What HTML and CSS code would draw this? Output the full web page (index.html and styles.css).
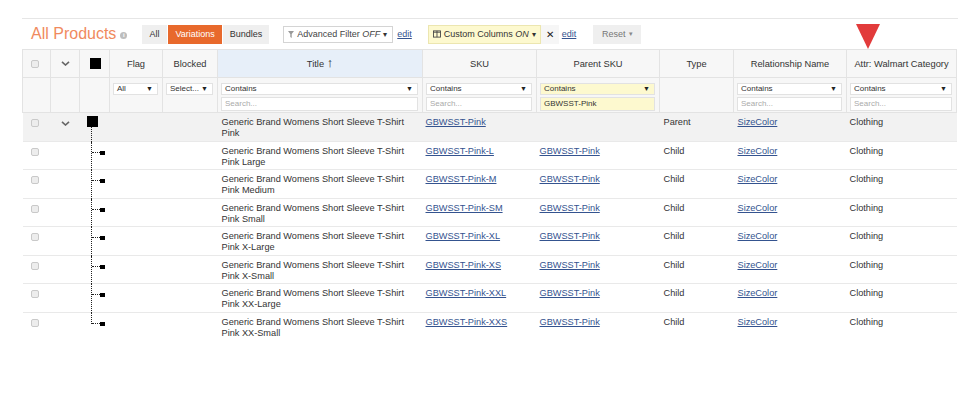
FILE: index.html
```html
<!DOCTYPE html>
<html lang="en">
<head>
  <meta charset="UTF-8" />
  <title>All Products - Variations</title>
  <link rel="stylesheet" href="styles.css">
</head>
<body>
  <div class="page">
    <div class="toolbar">
      <h1 class="page-title">All Products <span class="info-dot">i</span></h1>

      <div class="seg">
        <span class="seg-btn">All</span>
        <span class="seg-btn active">Variations</span>
        <span class="seg-btn">Bundles</span>
      </div>

      <div class="adv-filter">
        <svg class="funnel" width="6" height="7" viewBox="0 0 6 7"><path d="M0 0h6L3.7 3v4L2.3 6V3z" fill="#999"/></svg>
        <span class="lbl">Advanced Filter <em>OFF</em></span>
        <span class="caret">&#9662;</span>
      </div>
      <a href="#" class="edit-link">edit</a>

      <div class="custom-cols">
        <span class="cc-main">
          <svg class="cols-icon" width="9" height="8" viewBox="0 0 9 8"><rect x="0.5" y="0.5" width="8" height="7" fill="none" stroke="#444"/><path d="M4.5 0.5v7M0.5 2h8" stroke="#444"/></svg>
          <span class="lbl">Custom Columns <em>ON</em></span>
          <span class="caret">&#9662;</span>
        </span>
        <span class="cc-close">&#10005;</span>
      </div>
      <a href="#" class="edit-link">edit</a>

      <div class="reset-btn">Reset <span class="caret">&#9662;</span></div>

      <svg class="marker" width="24" height="25" viewBox="0 0 24 25"><path d="M0 0h24L12 25z" fill="#e23b3b"/></svg>
    </div>

    <table class="grid">
      <colgroup>
        <col style="width:28px"><col style="width:29px"><col style="width:30px">
        <col style="width:53px"><col style="width:55px"><col style="width:205px">
        <col style="width:114px"><col style="width:123px"><col style="width:74px">
        <col style="width:113px"><col style="width:110px">
      </colgroup>
      <thead>
        <tr class="head-row">
          <th><span class="chk"></span></th>
          <th><svg class="chev" width="9" height="5" viewBox="0 0 9 5"><path d="M1 0.8l3.5 3.2L8 0.8" fill="none" stroke="#666" stroke-width="1.6"/></svg></th>
          <th><span class="node-big"></span></th>
          <th>Flag</th>
          <th>Blocked</th>
          <th class="sorted">Title <span class="sort-arrow">&#8593;</span></th>
          <th>SKU</th>
          <th>Parent SKU</th>
          <th>Type</th>
          <th>Relationship Name</th>
          <th>Attr: Walmart Category</th>
        </tr>
        <tr class="filter-row">
          <th></th>
          <th></th>
          <th></th>
          <th><div class="sel">All<span class="arr">&#9660;</span></div></th>
          <th><div class="sel">Select...<span class="arr">&#9660;</span></div></th>
          <th>
            <div class="sel">Contains<span class="arr">&#9660;</span></div>
            <div class="search">Search...</div>
          </th>
          <th>
            <div class="sel">Contains<span class="arr">&#9660;</span></div>
            <div class="search">Search...</div>
          </th>
          <th>
            <div class="sel active">Contains<span class="arr">&#9660;</span></div>
            <div class="search active">GBWSST-Pink</div>
          </th>
          <th></th>
          <th>
            <div class="sel">Contains<span class="arr">&#9660;</span></div>
            <div class="search">Search...</div>
          </th>
          <th>
            <div class="sel">Contains<span class="arr">&#9660;</span></div>
            <div class="search">Search...</div>
          </th>
        </tr>
      </thead>
      <tbody>
        <tr class="row parent">
          <td><span class="chk"></span></td>
          <td><svg class="chev" width="9" height="5" viewBox="0 0 9 5"><path d="M1 0.8l3.5 3.2L8 0.8" fill="none" stroke="#666" stroke-width="1.6"/></svg></td>
          <td class="tree"><span class="node-big"></span></td>
          <td></td>
          <td></td>
          <td>Generic Brand Womens Short Sleeve T-Shirt<br>Pink</td>
          <td><a href="#">GBWSST-Pink</a></td>
          <td></td>
          <td>Parent</td>
          <td><a href="#">SizeColor</a></td>
          <td>Clothing</td>
        </tr>
        <tr class="row">
          <td><span class="chk"></span></td><td></td>
          <td class="tree child"><span class="node-small"></span></td>
          <td></td><td></td>
          <td>Generic Brand Womens Short Sleeve T-Shirt<br>Pink Large</td>
          <td><a href="#">GBWSST-Pink-L</a></td>
          <td><a href="#">GBWSST-Pink</a></td>
          <td>Child</td>
          <td><a href="#">SizeColor</a></td>
          <td>Clothing</td>
        </tr>
        <tr class="row">
          <td><span class="chk"></span></td><td></td>
          <td class="tree child"><span class="node-small"></span></td>
          <td></td><td></td>
          <td>Generic Brand Womens Short Sleeve T-Shirt<br>Pink Medium</td>
          <td><a href="#">GBWSST-Pink-M</a></td>
          <td><a href="#">GBWSST-Pink</a></td>
          <td>Child</td>
          <td><a href="#">SizeColor</a></td>
          <td>Clothing</td>
        </tr>
        <tr class="row">
          <td><span class="chk"></span></td><td></td>
          <td class="tree child"><span class="node-small"></span></td>
          <td></td><td></td>
          <td>Generic Brand Womens Short Sleeve T-Shirt<br>Pink Small</td>
          <td><a href="#">GBWSST-Pink-SM</a></td>
          <td><a href="#">GBWSST-Pink</a></td>
          <td>Child</td>
          <td><a href="#">SizeColor</a></td>
          <td>Clothing</td>
        </tr>
        <tr class="row">
          <td><span class="chk"></span></td><td></td>
          <td class="tree child"><span class="node-small"></span></td>
          <td></td><td></td>
          <td>Generic Brand Womens Short Sleeve T-Shirt<br>Pink X-Large</td>
          <td><a href="#">GBWSST-Pink-XL</a></td>
          <td><a href="#">GBWSST-Pink</a></td>
          <td>Child</td>
          <td><a href="#">SizeColor</a></td>
          <td>Clothing</td>
        </tr>
        <tr class="row">
          <td><span class="chk"></span></td><td></td>
          <td class="tree child"><span class="node-small"></span></td>
          <td></td><td></td>
          <td>Generic Brand Womens Short Sleeve T-Shirt<br>Pink X-Small</td>
          <td><a href="#">GBWSST-Pink-XS</a></td>
          <td><a href="#">GBWSST-Pink</a></td>
          <td>Child</td>
          <td><a href="#">SizeColor</a></td>
          <td>Clothing</td>
        </tr>
        <tr class="row">
          <td><span class="chk"></span></td><td></td>
          <td class="tree child"><span class="node-small"></span></td>
          <td></td><td></td>
          <td>Generic Brand Womens Short Sleeve T-Shirt<br>Pink XX-Large</td>
          <td><a href="#">GBWSST-Pink-XXL</a></td>
          <td><a href="#">GBWSST-Pink</a></td>
          <td>Child</td>
          <td><a href="#">SizeColor</a></td>
          <td>Clothing</td>
        </tr>
        <tr class="row last">
          <td><span class="chk"></span></td><td></td>
          <td class="tree child last"><span class="node-small"></span></td>
          <td></td><td></td>
          <td>Generic Brand Womens Short Sleeve T-Shirt<br>Pink XX-Small</td>
          <td><a href="#">GBWSST-Pink-XXS</a></td>
          <td><a href="#">GBWSST-Pink</a></td>
          <td>Child</td>
          <td><a href="#">SizeColor</a></td>
          <td>Clothing</td>
        </tr>
      </tbody>
    </table>
  </div>
</body>
</html>
```

FILE: styles.css
```css
* {
  margin: 0;
  padding: 0;
  box-sizing: border-box;
}

:root {
  --laranja: #e8692c;
  --laranja-claro: #f08a5e;
  --texto: #333333;
  --link: #34538f;
  --borda: #e3e3e3;
  --cinza-head: #f7f7f7;
  --amarelo: #fdf9cf;
}

body {
  font-family: "Liberation Sans", Arial, sans-serif;
  color: var(--texto);
  background-color: #ffffff;
}

.page {
  margin: 18px 17px 0 22px;
  border-top: 1px solid #e6e6e6;
}

/* Toolbar */
.toolbar {
  position: relative;
  height: 30px;
  display: flex;
  align-items: center;
  padding-left: 9px;
}

.page-title {
  font-size: 16px;
  font-weight: normal;
  color: var(--laranja-claro);
  display: flex;
  align-items: center;
  gap: 4px;
  margin-right: 15px;
}

.info-dot {
  display: inline-flex;
  align-items: center;
  justify-content: center;
  width: 7px;
  height: 7px;
  border-radius: 50%;
  background-color: #bdbdbd;
  color: #fff;
  font-size: 6px;
  font-weight: bold;
  margin-top: 2px;
}

.seg {
  display: flex;
  height: 19px;
  margin-right: 14px;
}

.seg-btn {
  display: flex;
  align-items: center;
  padding: 0 7px;
  font-size: 9px;
  background-color: #efefef;
  color: #333;
}

.seg-btn:first-child {
  padding: 0 8px 0 7px;
}

.seg-btn.active {
  background-color: var(--laranja);
  color: #fff;
  margin: 0 1px;
}

.adv-filter {
  display: flex;
  align-items: center;
  gap: 3px;
  height: 17px;
  width: 110px;
  padding: 0 4px;
  border: 1px solid #d4d4d4;
  font-size: 9px;
  color: #444;
}

.lbl {
  white-space: nowrap;
}

.adv-filter em,
.custom-cols em {
  font-style: italic;
}

.caret {
  font-size: 8px;
  color: #333;
}

.edit-link {
  font-size: 9px;
  color: var(--link);
  margin-left: 4px;
  margin-right: 16px;
}

.custom-cols {
  display: flex;
  height: 19px;
  font-size: 9px;
  color: #333;
}

.cc-main {
  display: flex;
  align-items: center;
  gap: 3px;
  width: 113px;
  padding: 0 4px;
  background-color: var(--amarelo);
  border: 1px solid #ece6b0;
}

.cc-close {
  display: flex;
  align-items: center;
  justify-content: center;
  width: 18px;
  background-color: #f6f6f6;
  font-size: 10px;
  color: #222;
}

.custom-cols + .edit-link {
  margin-left: 3px;
}

.reset-btn {
  display: flex;
  align-items: center;
  justify-content: center;
  gap: 3px;
  width: 48px;
  height: 19px;
  background-color: #efefef;
  font-size: 9px;
  color: #777;
  margin-left: 1px;
}

.reset-btn .caret {
  color: #888;
  font-size: 7px;
}

.marker {
  position: absolute;
  left: 834px;
  top: 5px;
}

/* Tabela */
.grid {
  width: 934px;
  table-layout: fixed;
  border-collapse: collapse;
  font-size: 9.2px;
}

.grid thead th {
  background-color: var(--cinza-head);
  border: 1px solid var(--borda);
  font-weight: normal;
  color: #333;
}

.head-row th {
  height: 28px;
  text-align: center;
  vertical-align: middle;
  font-size: 9.3px;
}

.head-row th.sorted {
  background-color: #e7eff9;
}

.sort-arrow {
  font-size: 13px;
  line-height: 9px;
  font-weight: bold;
  color: #222;
}

.filter-row th {
  height: 35px;
  vertical-align: top;
  padding: 5px 4px 0 3px;
  text-align: left;
}

.sel,
.search {
  position: relative;
  background-color: #fff;
  border: 1px solid #e2e2e2;
  font-size: 8px;
  padding-left: 3px;
  white-space: nowrap;
}

.sel {
  height: 12px;
  line-height: 10px;
  color: #333;
}

.sel .arr {
  position: absolute;
  right: 4px;
  top: 0;
  font-size: 7px;
  color: #222;
}

.search {
  height: 14px;
  line-height: 12px;
  margin-top: 2px;
  color: #aaa;
}

.sel.active,
.search.active {
  background-color: var(--amarelo);
  color: #333;
}

.row {
  height: 28.5px;
}

.row td {
  vertical-align: top;
  padding: 4px 3px 0;
  line-height: 11px;
  border-bottom: 1px solid #e9e9e9;
  white-space: nowrap;
}

.row.last td {
  border-bottom: none;
}

.row td:nth-child(6),
.row td:nth-child(9),
.row td:nth-child(10) {
  padding-left: 4px;
}

.row.parent td {
  background-color: #f2f2f2;
}

.grid a {
  color: var(--link);
  text-decoration: underline;
}

.chk {
  display: block;
  width: 8px;
  height: 8px;
  margin-left: 8px;
  border: 1px solid #c9c9c9;
  border-radius: 2px;
  background-color: #ededed;
}

.row td:first-child .chk {
  margin-top: 2px;
  margin-left: 5px;
}

.chev {
  display: block;
  margin-left: 10px;
}

.row .chev {
  margin-top: 4px;
  margin-left: 7px;
}

.node-big {
  display: block;
  width: 11px;
  height: 11px;
  margin-left: 10px;
  background-color: #000;
}

/* Linhas da arvore */
.tree {
  position: relative;
}

.tree .node-big {
  margin-left: 4px;
  margin-top: -1px;
}

.row.parent .tree::before {
  content: "";
  position: absolute;
  left: 11px;
  top: 14px;
  bottom: -1px;
  border-left: 1px dotted #222;
}

.tree.child::before {
  content: "";
  position: absolute;
  left: 11px;
  top: 0;
  bottom: -1px;
  border-left: 1px dotted #222;
}

.tree.child.last::before {
  bottom: auto;
  height: 11px;
}

.tree.child::after {
  content: "";
  position: absolute;
  left: 12px;
  top: 10px;
  width: 8px;
  border-top: 1px dotted #222;
}

.node-small {
  display: block;
  width: 5px;
  height: 4px;
  margin-left: 17px;
  margin-top: 5px;
  background-color: #000;
}
```
